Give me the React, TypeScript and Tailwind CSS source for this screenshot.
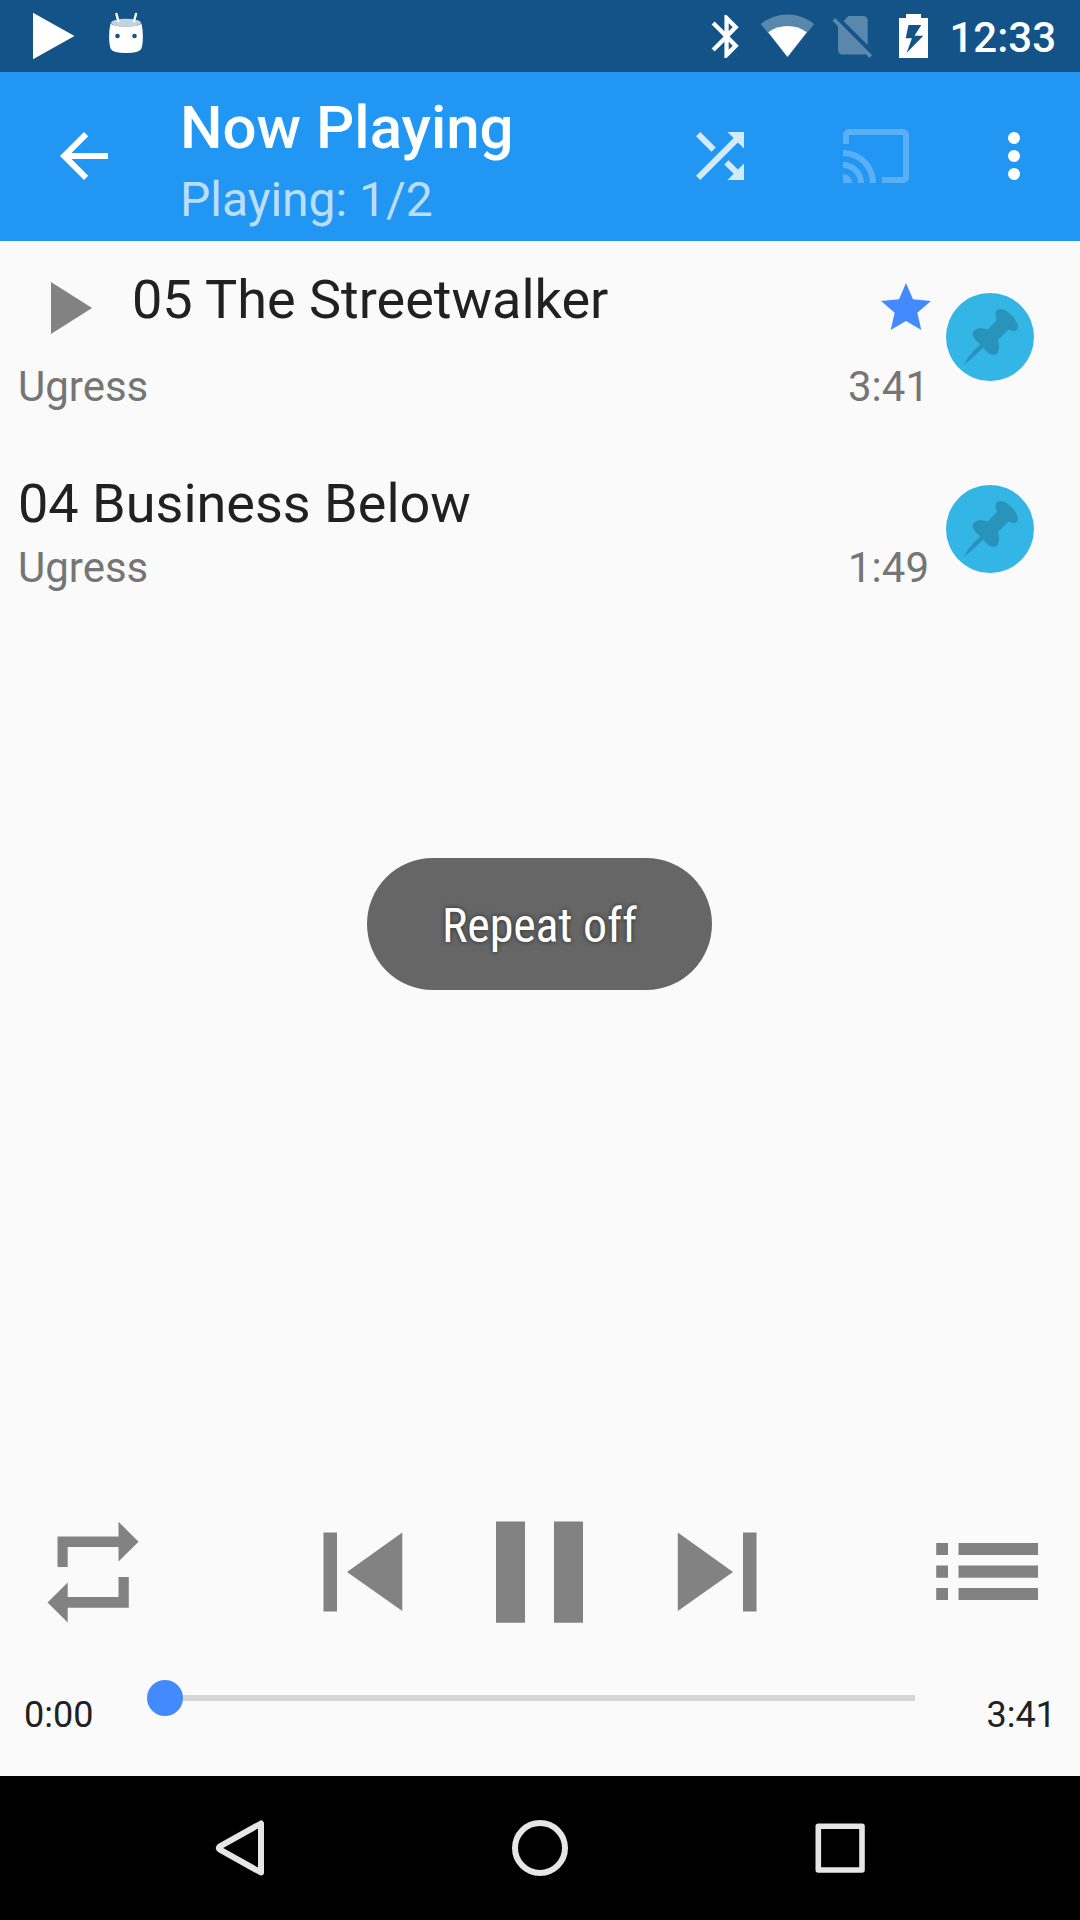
import React from "react";

function StatusBar() {
  return (
    <div className="flex h-[72px] justify-between bg-[#145388] text-white">
      <div className="flex">
        <svg className="h-[72px] w-[150px]" viewBox="0 0 150 72" fill="currentColor">
          <path d="M33 12.7 74.5 36 33 59.3z" />
          <path d="M110.5 23.5Q109 30 109.1 37 109.2 45 110.8 49 113 53 126 53 139 53 141.2 49 142.8 45 142.9 37 143 30 141.5 23.5 139 26.5 126 26.5 113 26.5 110.5 23.5z" />
          <ellipse cx="126" cy="22.8" rx="15" ry="4" fill="#c3d2df" />
          <path d="M116.4 14 118.4 21.2M136 14 134 21.2" stroke="currentColor" strokeWidth="2.4" strokeLinecap="round" />
          <circle cx="117.5" cy="36" r="2.3" fill="#145388" />
          <circle cx="134.5" cy="36" r="2.3" fill="#145388" />
        </svg>
      </div>
      <div className="flex items-center">
        <svg className="h-[72px] w-[240px]" viewBox="700 0 240 72" fill="currentColor">
          <path
            transform="translate(701 10.7) scale(2.13 2.15)"
            d="M17.71 7.71 12 2h-1v7.59L6.41 5 5 6.41 10.59 12 5 17.59 6.41 19 11 14.41V22h1l5.71-5.71-4.3-4.29 4.3-4.29zM13 5.83l1.88 1.88L13 9.59V5.83zm1.88 10.46L13 18.17v-3.76l1.88 1.88z"
          />
          <path d="M787.5 57 760.8 24A42 42 0 0 1 814.2 24z" opacity=".3" />
          <path d="M787.5 57 768.3 32.3A32 32 0 0 1 806.7 32.3z" />
          <path
            opacity=".3"
            transform="translate(827.4 9.7) scale(2.12 2.13)"
            d="M18.99 5c0-1.1-.89-2-1.99-2h-7L7.66 5.34 19 16.68 18.99 5zM3.65 3.88 2.38 5.15 5 7.77V19c0 1.1.9 2 2 2h10.01c.35 0 .67-.1.96-.26l1.88 1.88 1.27-1.27L3.65 3.88z"
          />
          <path
            fillRule="evenodd"
            d="M899 18h7v-4h15v4h7v40h-29zM908.5 25 905.7 38.3H911.9L906.6 53 923.3 35.7H914.5L921.3 25z"
          />
        </svg>
        <span className="mr-6 ml-[9px] pt-1 text-[42px] leading-[72px] font-medium">12:33</span>
      </div>
    </div>
  );
}

function AppBar() {
  return (
    <div className="flex h-[169px] items-center bg-[#2196f3] text-white">
      <svg className="ml-12 size-[72px] -translate-y-px" viewBox="0 0 24 24" fill="currentColor">
        <path d="M20 11H7.83l5.59-5.59L12 4l-8 8 8 8 1.41-1.41L7.83 13H20v-2z" />
      </svg>
      <div className="ml-[60px] flex flex-1 flex-col pt-[15px]">
        <span className="text-[60px] leading-[72px] font-medium">Now Playing</span>
        <span className="text-[48px] leading-[72px] text-white/70">Playing: 1/2</span>
      </div>
      <svg className="size-[72px] -translate-y-px opacity-80" viewBox="0 0 24 24" fill="currentColor">
        <path d="M10.59 9.17 5.41 4 4 5.41l5.17 5.17 1.42-1.41zM14.5 4l2.04 2.04L4 18.59 5.41 20 17.96 7.46 20 9.5V4h-5.5zm.33 9.41-1.41 1.41 3.13 3.13L14.5 20H20v-5.5l-2.04 2.04-3.13-3.13z" />
      </svg>
      <svg className="ml-[84px] size-[72px] -translate-y-px opacity-25" viewBox="0 0 24 24" fill="currentColor">
        <path d="M21 3H3c-1.1 0-2 .9-2 2v3h2V5h18v14h-7v2h7c1.1 0 2-.9 2-2V5c0-1.1-.9-2-2-2zM1 18v3h3c0-1.66-1.34-3-3-3zm0-4v2c2.76 0 5 2.24 5 5h2c0-3.87-3.13-7-7-7zm0-4v2c4.97 0 9 4.03 9 9h2c0-6.08-4.93-11-11-11z" />
      </svg>
      <svg className="mr-[30px] ml-[66px] size-[72px] -translate-y-px" viewBox="0 0 24 24" fill="currentColor">
        <circle cx="12" cy="6" r="2" />
        <circle cx="12" cy="12" r="2" />
        <circle cx="12" cy="18" r="2" />
      </svg>
    </div>
  );
}

function PinBadge() {
  return (
    <svg className="size-[88px]" viewBox="378 159 264 264">
      <circle cx="510" cy="291" r="132" fill="#33b5e5" />
      <path
        fill="#2a93bc"
        d="M528 214C533 206 543 206 552 209C572 218 588 238 593 255C595 265 590 273 581 273C574 273 569 271 566 268L534 301C539 315 538 330 532 340C526 347 517 345 509 341C502 337 496 332 490 325L490 322C472 342 453 359 430 374C443 354 460 331 481 312C469 303 459 294 458 281C457 274 464 268 472 266C483 264 493 265 503 269L531 239C527 231 525 222 528 214Z"
      />
    </svg>
  );
}

function TrackList() {
  return (
    <div className="flex flex-1 flex-col">
      <div className="flex h-[192px]">
        <div className="flex w-[946px] flex-col">
          <div className="flex h-[121px]">
            <svg className="mt-[41px] ml-[51px] h-[52px] w-[41px]" viewBox="0 0 41 52" fill="#828282">
              <path d="M0 0 41 26 0 52z" />
            </svg>
            <span className="mt-[23px] ml-10 flex-1 text-[54px] leading-[72px] text-[#212121]">05 The Streetwalker</span>
            <svg className="mt-[42px] mr-[15px] h-[47px] w-[50px]" viewBox="183 130 150 141" fill="#448aff">
              <path d="M258 130 279 179 333 184 292 219 304 271 258 244 212 271 224 219 183 184 237 179z" />
            </svg>
          </div>
          <div className="flex justify-between pr-[15px] pl-[18px] text-[42px] leading-[50px] text-[#757575]">
            <span>Ugress</span>
            <span className="w-[83px]">3:41</span>
          </div>
        </div>
        <div className="pt-[52px]">
          <PinBadge />
        </div>
      </div>
      <div className="flex h-[192px]">
        <div className="flex w-[946px] flex-col pt-[35px]">
          <span className="pl-[18px] text-[54px] leading-[72px] text-[#212121]">04 Business Below</span>
          <div className="mt-[3px] flex justify-between pr-[15px] pl-[18px] text-[42px] leading-[50px] text-[#757575]">
            <span>Ugress</span>
            <span className="w-[83px]">1:49</span>
          </div>
        </div>
        <div className="pt-[52px]">
          <PinBadge />
        </div>
      </div>
    </div>
  );
}

function Controls() {
  return (
    <div className="flex h-[296px] flex-col">
      <div className="flex h-[184px] items-center text-[#828282]">
        <svg className="ml-[47px] h-[102px] w-[92px]" viewBox="47 1521 92 102" fill="currentColor">
          <path d="M57.5 1536.5H118.5V1521.7L138.5 1541.7 118.5 1561.5V1547H67.7V1567H57.5z" />
          <path d="M118.5 1577H128.8V1607.7H67.7V1622.5L47.5 1602.5 67.7 1582.5V1597H118.5z" />
        </svg>
        <svg className="ml-[184px] h-20 w-20" viewBox="323 1532 80 80" fill="currentColor">
          <path d="M323.5 1532.5H337V1611.5H323.5zM402.3 1532.5V1611L347 1572z" />
        </svg>
        <svg className="ml-[92px] h-[102px] w-[90px]" viewBox="495 1521 90 102" fill="currentColor">
          <path d="M496 1521.5H525V1622.7H496zM554 1521.5H583V1622.7H554z" />
        </svg>
        <svg className="ml-[92px] h-20 w-20" viewBox="677 1532 80 80" fill="currentColor">
          <path d="M677.8 1532.5 733 1572 677.8 1611zM743 1532.5H756.5V1611.5H743z" />
        </svg>
        <svg className="ml-[178px] h-[60px] w-[104px]" viewBox="935 1542 104 60" fill="currentColor">
          <path d="M936.2 1543H948V1555H936.2zM936.2 1565.5H948V1577.7H936.2zM936.2 1588H948V1600H936.2zM958.5 1543H1038V1555H958.5zM958.5 1565.5H1038V1577.7H958.5zM958.5 1588H1038V1600H958.5z" />
        </svg>
      </div>
      <div className="flex h-[68px] px-6 text-[36px] leading-[42px] text-[#212121]">
        <span className="mt-[30px] w-[141px]">0:00</span>
        <div className="relative mt-[31px] h-1.5 w-[750px] bg-[#d6d6d6]">
          <div className="absolute -top-[15px] -left-[18px] size-9 rounded-full bg-[#448aff]" />
        </div>
        <span className="mt-[30px] ml-auto">3:41</span>
      </div>
    </div>
  );
}

function NavBar() {
  return (
    <div className="flex h-36 items-center bg-black text-[#e6e6e6]">
      <svg className="ml-[210px] size-[60px]" viewBox="0 0 60 60" fill="none" stroke="currentColor" strokeWidth="6" strokeLinejoin="round">
        <path d="M51 5.5V54.5L9.5 31.3Q8.3 30 9.5 28.7z" />
      </svg>
      <svg className="ml-60 size-[60px]" viewBox="0 0 60 60" fill="none" stroke="currentColor" strokeWidth="6">
        <circle cx="30" cy="30" r="25" />
      </svg>
      <svg className="ml-60 size-[60px]" viewBox="0 0 60 60" fill="none" stroke="currentColor" strokeWidth="5.6" strokeLinejoin="round">
        <path d="M8.3 8.3H52V52H8.3z" />
      </svg>
    </div>
  );
}

export default function App() {
  return (
    <div className="relative flex h-[1920px] w-[1080px] flex-col overflow-hidden bg-[#fafafa] font-[Roboto,sans-serif] whitespace-nowrap">
      <StatusBar />
      <AppBar />
      <TrackList />
      <Controls />
      <NavBar />
      <div className="absolute top-[858px] left-[367px] flex h-[132px] w-[345px] items-center justify-center rounded-full bg-[#666666] pt-1">
        <span className="font-['Roboto_Condensed',Roboto,sans-serif] text-[48px] leading-[56px] tracking-[-0.2px] text-white [font-stretch:condensed] [text-shadow:0_0_5px_rgba(0,0,0,0.6)]">
          Repeat off
        </span>
      </div>
    </div>
  );
}
